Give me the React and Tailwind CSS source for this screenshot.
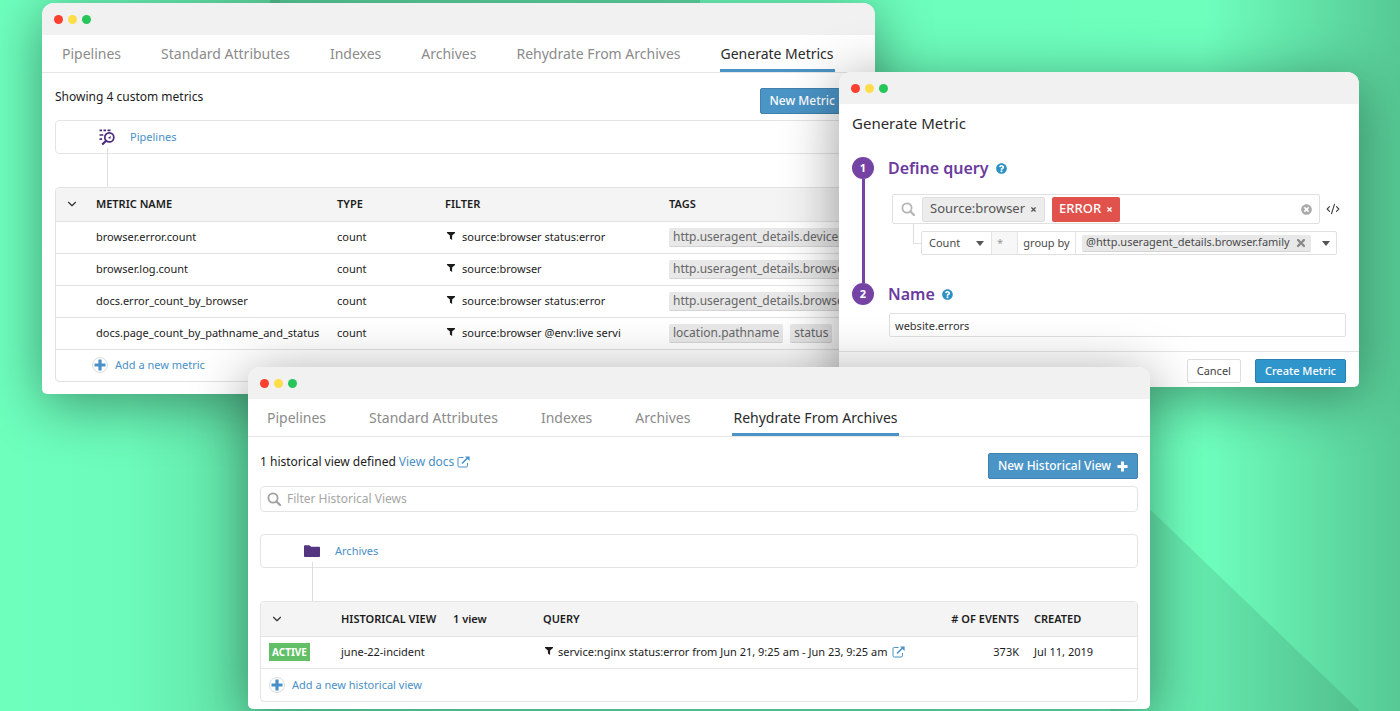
import { ChevronDown, CodeXml } from "lucide-react";
import { FaQuestionCircle, FaTimes, FaTimesCircle } from "react-icons/fa";

const METRICS = [
  {
    name: "browser.error.count",
    type: "count",
    filter: "source:browser status:error",
    tags: ["http.useragent_details.device.f"],
  },
  {
    name: "browser.log.count",
    type: "count",
    filter: "source:browser",
    tags: ["http.useragent_details.browser"],
  },
  {
    name: "docs.error_count_by_browser",
    type: "count",
    filter: "source:browser status:error",
    tags: ["http.useragent_details.browser"],
  },
  {
    name: "docs.page_count_by_pathname_and_status",
    type: "count",
    filter: "source:browser @env:live servic",
    tags: ["location.pathname", "status"],
  },
];

function SearchIcon({ className }) {
  return (
    <svg viewBox="0 0 14 14" className={className} fill="none" stroke="currentColor" strokeLinecap="round">
      <circle cx="6" cy="6" r="4.6" strokeWidth="1.8" />
      <path d="M9.5 9.5 13 13" strokeWidth="2.2" />
    </svg>
  );
}

function ExternalIcon() {
  return (
    <svg viewBox="0 0 13 12" className="h-3 w-[13px] shrink-0" fill="none" stroke="currentColor">
      <path d="M6.5 1.5H2.3A1.3 1.3 0 0 0 1 2.8v6.9A1.3 1.3 0 0 0 2.3 11h6.9a1.3 1.3 0 0 0 1.3-1.3V7" />
      <path d="M5 7.5 10.5 2" strokeWidth="1.6" />
      <path d="M8 .4h4.6V5z" fill="currentColor" stroke="none" />
    </svg>
  );
}

function PlusIcon({ className }) {
  return (
    <svg viewBox="0 0 12 12" className={className} fill="none" stroke="currentColor" strokeWidth="3.2">
      <path d="M6 .5v11M.5 6h11" />
    </svg>
  );
}

function FunnelIcon() {
  return (
    <svg viewBox="0 0 8 8" className="mb-[3px] ml-[2px] h-2 w-2 shrink-0" fill="currentColor">
      <path d="M0 0h8v1L5.100 3.600V8L2.900 6.600v-3L0 1z" />
    </svg>
  );
}

function PipelinesIcon() {
  return (
    <svg viewBox="0 0 16 16" className="h-4 w-4" fill="none" stroke="#4b2a7b" strokeWidth="1.7">
      <path d="M.5 1.4h2.500M4.500 1.4h2.500M8.500 1.4h3M.5 6h3.8M.5 10.200h2.600" />
      <circle cx="10.3" cy="8.4" r="4.5" />
      <path d="M7.2 11.8 3.2 15.6" strokeWidth="2.1" />
      <path d="m8.8 9 3-1.9-.3 2.6z" fill="#4b2a7b" stroke="none" />
    </svg>
  );
}

function FolderIcon() {
  return (
    <svg viewBox="0 0 16 12" className="h-3 w-4" fill="#54357f">
      <path d="M0 1.3C0 .6.5.2 1.1.2h4.2l1.9 1.6h7.7c.6 0 1.1.4 1.1 1V11c0 .6-.5 1-1.1 1H1.1C.5 12 0 11.600 0 11z" />
    </svg>
  );
}

function Window({ className, children }) {
  return (
    <section
      className={`absolute overflow-hidden bg-white rounded-t-[12px] rounded-b-[5px] shadow-[0_10px_56px_rgba(0,0,0,0.4)] ${className}`}
    >
      <div className="flex h-8 items-center gap-[5px] bg-[#f1f1f1] px-3">
        <span className="h-[9px] w-[9px] rounded-full bg-[#fb402f]" />
        <span className="h-[9px] w-[9px] rounded-full bg-[#fddd49]" />
        <span className="h-[9px] w-[9px] rounded-full bg-[#27c65b]" />
      </div>
      {children}
    </section>
  );
}

function Tabs({ items, active, className }) {
  return (
    <nav className={`flex h-[38px] whitespace-nowrap border-b border-[#e6e6e6] text-[14px] ${className}`}>
      {items.map((item) => (
        <a
          key={item}
          href="#"
          className={
            item === active
              ? "border-b-3 border-[#4a93c4] px-px leading-[37px] text-[#2b2b2b]"
              : "px-px leading-[37px] text-[#8b8b8b]"
          }
        >
          {item}
        </a>
      ))}
    </nav>
  );
}

function SourceBox({ icon, label }) {
  return (
    <div className="relative mb-[33px] flex h-[34px] items-center gap-[15px] rounded-sm border border-[#e4e4e4] pl-[43px]">
      {icon}
      <a href="#" className="text-[11px] text-[#4a90c6]">
        {label}
      </a>
      <span className="absolute left-[51px] top-[27px] h-[39px] w-px bg-[#dedede]" />
    </div>
  );
}

function PrimaryButton({ children }) {
  return (
    <button
      type="button"
      className="flex h-[26px] items-center gap-[6px] rounded-[2px] border border-[#4180ab] bg-[#4a94c6] px-[9px] text-[12px] font-medium text-white"
    >
      {children}
      <PlusIcon className="h-[11px] w-[11px]" />
    </button>
  );
}

function AddLink({ children }) {
  return (
    <a href="#" className="flex items-center gap-[7px] text-[#4a90c6]">
      <span className="flex h-4 w-4 items-center justify-center rounded-full border border-[#dcdcdc]">
        <PlusIcon className="h-3 w-3 shrink-0" />
      </span>
      {children}
    </a>
  );
}

function Tag({ children }) {
  return (
    <span className="inline-block h-[19px] rounded-[2px] border-b border-[#d4d4d4] bg-[#e8e8e9] px-1 text-[12px] leading-[18px] text-[#666]">
      {children}
    </span>
  );
}

function MetricsWindow() {
  return (
    <Window className="left-[42px] right-[525px] top-[3px]">
      <Tabs
        items={["Pipelines", "Standard Attributes", "Indexes", "Archives", "Rehydrate From Archives", "Generate Metrics"]}
        active="Generate Metrics"
        className="gap-[38px] px-[19px]"
      />
      <div className="px-[13px] pb-3 pt-[15px]">
        <div className="mb-[6px] flex items-start justify-between">
          <p className="text-[12px] leading-[18px] text-[#1c1c1c]">Showing 4 custom metrics</p>
          <PrimaryButton>New Metric</PrimaryButton>
        </div>
        <SourceBox icon={<PipelinesIcon />} label="Pipelines" />
        <div className="overflow-hidden rounded-sm border border-[#e2e2e2]">
          <table className="w-full table-fixed whitespace-nowrap text-left text-[11px] text-[#1c1c1c]">
            <colgroup>
              <col className="w-[40px]" />
              <col className="w-[241px]" />
              <col className="w-[108px]" />
              <col className="w-[224px]" />
              <col />
            </colgroup>
            <thead>
              <tr className="h-[33px] border-b border-[#e2e2e2] bg-[#f4f4f4]">
                <th aria-label="Expand">
                  <ChevronDown className="ml-[9px] h-[14px] w-[14px] text-[#333]" strokeWidth={2} />
                </th>
                <th className="font-semibold">METRIC NAME</th>
                <th className="font-semibold">TYPE</th>
                <th className="font-semibold">FILTER</th>
                <th className="font-semibold">TAGS</th>
              </tr>
            </thead>
            <tbody>
              {METRICS.map((metric) => (
                <tr key={metric.name} className="h-8 border-b border-[#e2e2e2]">
                  <td />
                  <td>{metric.name}</td>
                  <td>{metric.type}</td>
                  <td>
                    <div className="flex items-center gap-[7px]">
                      <FunnelIcon />
                      <span className="w-[159px] overflow-hidden">{metric.filter}</span>
                    </div>
                  </td>
                  <td>
                    <div className="flex gap-[7px]">
                      {metric.tags.map((tag) => (
                        <Tag key={tag}>{tag}</Tag>
                      ))}
                    </div>
                  </td>
                </tr>
              ))}
              <tr className="h-8">
                <td colSpan={5} className="pl-9">
                  <AddLink>Add a new metric</AddLink>
                </td>
              </tr>
            </tbody>
          </table>
        </div>
      </div>
    </Window>
  );
}

function StepHeading({ number, children }) {
  return (
    <div className="flex h-[22px] items-center">
      <span className="flex h-[22px] w-[22px] items-center justify-center rounded-full bg-[#7443a4] text-[11px] font-bold text-white">
        {number}
      </span>
      <h3 className="ml-[14px] text-[16px] font-semibold leading-[22px] text-[#6a3a9e]">{children}</h3>
      <FaQuestionCircle className="ml-[7px] h-[11px] w-[11px] text-[#2b90c4]" />
    </div>
  );
}

function GenerateMetricWindow() {
  return (
    <Window className="left-[839px] right-[41px] top-[72px]">
      <form onSubmit={(event) => event.preventDefault()}>
        <div className="px-[13px] pb-[14px] pt-2">
          <h2 className="text-[15px] leading-[22px] text-[#2b2b2b]">Generate Metric</h2>
          <div className="mt-[23px]">
            <StepHeading number={1}>Define query</StepHeading>
            <div className="ml-[10px] h-[104px] border-l-3 border-[#7443a4] pl-[27px] pt-[15px]">
              <div className="flex items-center gap-[6px]">
                <div className="flex h-[30px] grow items-center rounded-[2px] border border-[#e0e0e0] pl-2 pr-[7px] text-[13px]">
                  <SearchIcon className="h-[14px] w-[14px] shrink-0 text-[#b5b5b5]" />
                  <span className="ml-[7px] flex h-[25px] items-center gap-[5px] rounded-[2px] border border-[#dedede] bg-[#ececec] px-[7px] text-[#555]">
                    Source:browser
                    <FaTimes className="h-[7px] w-[7px]" />
                  </span>
                  <span className="ml-[7px] flex h-[25px] items-center gap-[5px] rounded-[2px] bg-[#e0524b] px-[7px] font-medium text-white">
                    ERROR
                    <FaTimes className="h-[7px] w-[7px]" />
                  </span>
                  <input aria-label="Search query" className="w-0 min-w-0 grow outline-none" />
                  <FaTimesCircle className="h-[11px] w-[11px] text-[#aaa]" />
                </div>
                <CodeXml className="mr-[6px] h-[14px] w-[14px] shrink-0 text-[#444]" strokeWidth={2} />
              </div>
              <div className="ml-[21px] mr-[9px] flex">
                <span className="h-5 w-2 shrink-0 border-b border-l border-[#dedede]" />
                <div className="mt-[7px] flex h-6 grow items-stretch whitespace-nowrap rounded-[2px] border border-[#e0e0e0] text-[11px] text-[#4a4a4a]">
                  <div className="relative flex w-[69px] items-center">
                    <select aria-label="Aggregation" className="w-full appearance-none pl-[7px] outline-none">
                      <option>Count</option>
                    </select>
                    <span className="pointer-events-none absolute right-[7px] border-x-4 border-t-[5px] border-x-transparent border-t-[#555]" />
                  </div>
                  <span className="flex w-[27px] items-center border-x border-[#e4e4e4] bg-[#f7f7f7] pl-[5px] text-[#999]">*</span>
                  <span className="flex w-[58px] items-center justify-center border-r border-[#e4e4e4]">group by</span>
                  <span className="ml-[6px] flex h-[17px] items-center gap-[5px] self-center rounded-[2px] border-b border-[#d4d4d4] bg-[#e8e8e9] px-1">
                    @http.useragent_details.browser.family
                    <FaTimes className="h-3 w-3 text-[#888]" />
                  </span>
                  <span className="ml-auto mr-[6px] self-center border-x-4 border-t-[5px] border-x-transparent border-t-[#555]" />
                </div>
              </div>
            </div>
            <StepHeading number={2}>Name</StepHeading>
            <input
              aria-label="Metric name"
              defaultValue="website.errors"
              className="ml-[37px] mt-2 block h-6 w-[calc(100%-37px)] rounded-[2px] border border-[#e0e0e0] px-[5px] text-[11px] text-[#333] outline-none"
            />
          </div>
        </div>
        <div className="flex items-center justify-end gap-[14px] border-t border-[#e4e4e4] px-[13px] pb-1 pt-[7px] text-[11px]">
          <button type="button" className="h-6 rounded-[2px] border border-[#dedede] px-[9px] text-[#444]">
            Cancel
          </button>
          <button type="submit" className="h-6 rounded-[2px] border border-[#2a7fb0] bg-[#2f96cc] px-[9px] font-medium text-white">
            Create Metric
          </button>
        </div>
      </form>
    </Window>
  );
}

function HistoricalWindow() {
  return (
    <Window className="left-[248px] right-[250px] top-[367px]">
      <Tabs
        items={["Pipelines", "Standard Attributes", "Indexes", "Archives", "Rehydrate From Archives"]}
        active="Rehydrate From Archives"
        className="gap-[41px] px-[18px]"
      />
      <div className="px-3 pb-[7px] pt-4">
        <div className="mb-[7px] flex items-start justify-between">
          <p className="flex items-center gap-[3px] text-[12px] leading-[18px] text-[#1c1c1c]">
            1 historical view defined
            <a href="#" className="flex items-center gap-[3px] text-[#4a90c6]">
              View docs <ExternalIcon />
            </a>
          </p>
          <PrimaryButton>New Historical View</PrimaryButton>
        </div>
        <label className="mb-[22px] flex h-[26px] items-center gap-[6px] rounded-sm border border-[#e4e4e4] px-[6px]">
          <SearchIcon className="h-[14px] w-[14px] text-[#a0a0a0]" />
          <input
            aria-label="Filter historical views"
            placeholder="Filter Historical Views"
            className="grow text-[12px] outline-none placeholder:text-[#a6a6a6]"
          />
        </label>
        <SourceBox icon={<FolderIcon />} label="Archives" />
        <div className="overflow-hidden rounded-sm border border-[#e4e4e4]">
          <table className="w-full table-fixed whitespace-nowrap text-left text-[11px] text-[#1c1c1c]">
            <colgroup>
              <col className="w-[80px]" />
              <col className="w-[202px]" />
              <col />
              <col className="w-[90px]" />
              <col className="w-[118px]" />
            </colgroup>
            <thead>
              <tr className="h-[34px] border-b border-[#e4e4e4] bg-[#f4f4f4]">
                <th aria-label="Expand">
                  <ChevronDown className="ml-[9px] h-[14px] w-[14px] text-[#333]" strokeWidth={2} />
                </th>
                <th className="font-semibold">
                  HISTORICAL VIEW <span className="ml-[14px]">1 view</span>
                </th>
                <th className="font-semibold">QUERY</th>
                <th className="text-right font-semibold"># OF EVENTS</th>
                <th className="pl-[15px] font-semibold">CREATED</th>
              </tr>
            </thead>
            <tbody>
              <tr className="h-8 border-b border-[#e4e4e4]">
                <td className="pl-2">
                  <span className="inline-block h-[18px] bg-[#62bf68] px-[3px] text-[10px] font-bold leading-[18px] text-white">
                    ACTIVE
                  </span>
                </td>
                <td>june-22-incident</td>
                <td>
                  <div className="flex items-center gap-[5px]">
                    <FunnelIcon />
                    service:nginx status:error from Jun 21, 9:25 am - Jun 23, 9:25 am
                    <a href="#" aria-label="Open in explorer" className="text-[#4a90c6]">
                      <ExternalIcon />
                    </a>
                  </div>
                </td>
                <td className="text-right">373K</td>
                <td className="pl-[15px]">Jul 11, 2019</td>
              </tr>
              <tr className="h-[33px]">
                <td colSpan={5} className="pl-2">
                  <AddLink>Add a new historical view</AddLink>
                </td>
              </tr>
            </tbody>
          </table>
        </div>
      </div>
    </Window>
  );
}

function Backdrop() {
  return (
    <svg viewBox="0 0 1400 711" preserveAspectRatio="none" className="absolute inset-0 h-full w-full">
      <defs>
        <linearGradient id="base">
          <stop offset="0" stopColor="#6effbd" />
          <stop offset="0.09" stopColor="#6cfbba" />
          <stop offset="0.2" stopColor="#5fdca2" />
          <stop offset="0.2" stopColor="#66ecaf" />
          <stop offset="0.5" stopColor="#6cfbba" />
          <stop offset="0.86" stopColor="#6effbd" />
          <stop offset="1" stopColor="#56c994" />
        </linearGradient>
      </defs>
      <path d="M0 0h1400v711H0z" fill="url(#base)" />
      <path d="M270 0h430v40H270z" fill="#000" fillOpacity="0.12" />
      <path d="M1110 471 1360 711H1110z" fill="#000" fillOpacity="0.09" />
    </svg>
  );
}

export default function App() {
  return (
    <main className="relative min-h-screen overflow-hidden font-['Noto_Sans',sans-serif]">
      <Backdrop />
      <MetricsWindow />
      <GenerateMetricWindow />
      <HistoricalWindow />
    </main>
  );
}
